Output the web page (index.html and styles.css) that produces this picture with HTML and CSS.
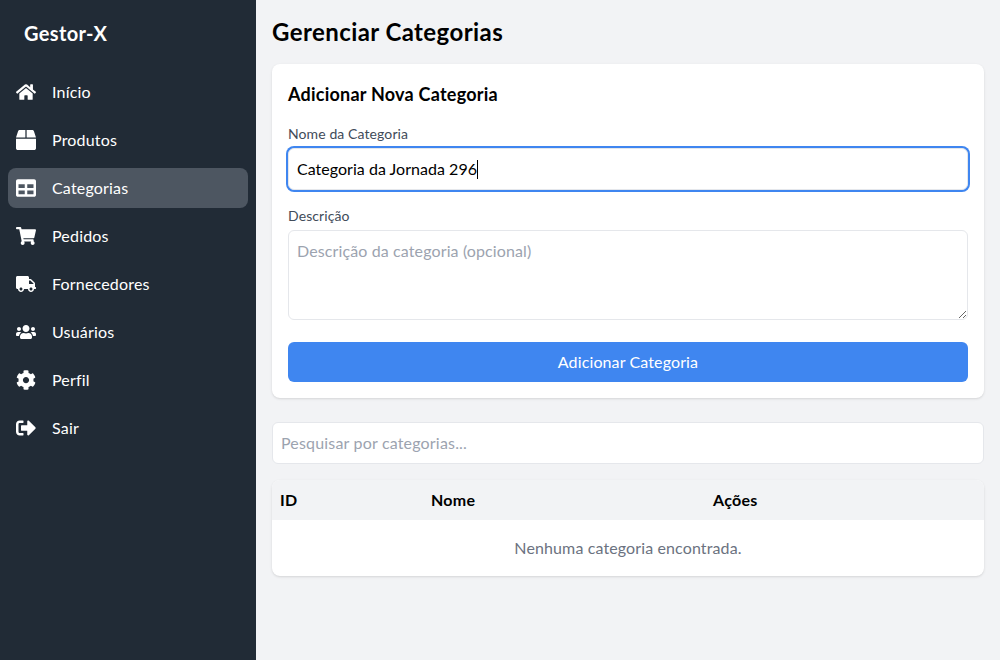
FILE: index.html
```html
<!DOCTYPE html>
<html lang="pt-BR">
<head>
<meta charset="utf-8">
<title>Gestor-X</title>
<link rel="stylesheet" href="styles.css">
</head>
<body>
<div class="app">
  <aside class="sidebar">
    <div class="brand">Gestor-X</div>
    <nav class="nav">
      <a class="nav-item"><svg class="icon" viewBox="0 0 576 512"><path d="M280.37 148.26L96 300.11V464a16 16 0 0 0 16 16l112.06-.29a16 16 0 0 0 15.92-16V368a16 16 0 0 1 16-16h64a16 16 0 0 1 16 16v95.64a16 16 0 0 0 16 16.05L464 480a16 16 0 0 0 16-16V300L295.67 148.26a12.19 12.19 0 0 0-15.3 0zM571.6 251.47L488 182.56V44.05a12 12 0 0 0-12-12h-56a12 12 0 0 0-12 12v72.61L318.47 43a48 48 0 0 0-61 0L4.34 251.47a12 12 0 0 0-1.6 16.9l25.5 31A12 12 0 0 0 45.15 301l235.22-193.74a12.19 12.19 0 0 1 15.3 0L530.9 301a12 12 0 0 0 16.9-1.6l25.5-31a12 12 0 0 0-1.7-16.93z"/></svg><span>Início</span></a>
      <a class="nav-item"><svg class="icon" viewBox="0 0 512 512"><path d="M509.5 184.6L458.9 32.8C452.4 13.2 434.1 0 413.4 0H272v192h238.7c-.4-2.5-.4-5-1.2-7.4zM240 0H98.6c-20.7 0-39 13.2-45.5 32.8L2.5 184.6c-.8 2.4-.8 4.9-1.2 7.4H240V0zM0 224v240c0 26.5 21.5 48 48 48h416c26.5 0 48-21.5 48-48V224H0z"/></svg><span>Produtos</span></a>
      <a class="nav-item active"><svg class="icon" viewBox="0 0 512 512"><path d="M464 32H48C21.49 32 0 53.49 0 80v352c0 26.51 21.49 48 48 48h416c26.51 0 48-21.49 48-48V80c0-26.51-21.49-48-48-48zM224 416H64v-96h160v96zm0-160H64v-96h160v96zm224 160H288v-96h160v96zm0-160H288v-96h160v96z"/></svg><span>Categorias</span></a>
      <a class="nav-item"><svg class="icon" viewBox="0 0 576 512"><path d="M528.12 301.319l47.273-208C578.806 78.301 567.391 64 551.99 64H159.208l-9.166-44.81C147.758 8.021 137.93 0 126.529 0H24C10.745 0 0 10.745 0 24v16c0 13.255 10.745 24 24 24h69.883l70.248 343.435C147.325 417.1 136 435.222 136 456c0 30.928 25.072 56 56 56s56-25.072 56-56c0-15.674-6.447-29.835-16.824-40h209.647C430.447 426.165 424 440.326 424 456c0 30.928 25.072 56 56 56s56-25.072 56-56c0-22.172-12.888-41.332-31.579-50.405l5.517-24.276c3.413-15.018-8.002-29.319-23.403-29.319H218.117l-6.545-32h293.145c11.206 0 20.92-7.754 23.403-18.681z"/></svg><span>Pedidos</span></a>
      <a class="nav-item"><svg class="icon" viewBox="0 0 640 512"><path d="M624 352h-16V243.9c0-12.7-5.1-24.9-14.1-33.9L494 110.1c-9-9-21.2-14.1-33.9-14.1H416V48c0-26.5-21.5-48-48-48H48C21.5 0 0 21.5 0 48v320c0 26.5 21.5 48 48 48h16c0 53 43 96 96 96s96-43 96-96h128c0 53 43 96 96 96s96-43 96-96h48c8.8 0 16-7.2 16-16v-32c0-8.8-7.2-16-16-16zM160 464c-26.5 0-48-21.5-48-48s21.5-48 48-48 48 21.5 48 48-21.5 48-48 48zm320 0c-26.5 0-48-21.5-48-48s21.5-48 48-48 48 21.5 48 48-21.5 48-48 48zm80-208H416V144h44.1l99.9 99.9V256z"/></svg><span>Fornecedores</span></a>
      <a class="nav-item"><svg class="icon" viewBox="0 0 640 512"><path d="M96 224c35.3 0 64-28.7 64-64s-28.7-64-64-64-64 28.7-64 64 28.7 64 64 64zm448 0c35.3 0 64-28.7 64-64s-28.7-64-64-64-64 28.7-64 64 28.7 64 64 64zm32 32h-64c-17.6 0-33.5 7.1-45.1 18.6 40.3 22.1 68.9 62 75.1 109.4h66c17.7 0 32-14.3 32-32v-32c0-35.3-28.7-64-64-64zm-256 0c61.9 0 112-50.1 112-112S381.9 32 320 32 208 82.1 208 144s50.1 112 112 112zm76.8 32h-8.3c-20.8 10-43.9 16-68.5 16s-47.6-6-68.5-16h-8.3C179.6 288 128 339.6 128 403.2V432c0 26.5 21.5 48 48 48h288c26.5 0 48-21.5 48-48v-28.8c0-63.6-51.6-115.2-115.2-115.2zm-223.7-13.4C161.5 263.1 145.6 256 128 256H64c-35.3 0-64 28.7-64 64v32c0 17.7 14.3 32 32 32h65.9c6.3-47.4 34.9-87.3 75.2-109.4z"/></svg><span>Usuários</span></a>
      <a class="nav-item"><svg class="icon" viewBox="0 0 512 512"><path d="M487.4 315.7l-42.6-24.6c4.3-23.2 4.3-47 0-70.2l42.6-24.6c4.9-2.8 7.1-8.6 5.5-14-11.1-35.6-30-67.8-54.7-94.6-3.8-4.1-10-5.1-14.8-2.3L380.8 110c-17.9-15.4-38.5-27.3-60.8-35.1V25.8c0-5.6-3.9-10.5-9.4-11.7-36.7-8.2-74.3-7.8-109.2 0-5.5 1.2-9.4 6.1-9.4 11.7V75c-22.2 7.9-42.8 19.8-60.8 35.1L88.7 85.5c-4.9-2.8-11-1.9-14.8 2.3-24.7 26.7-43.6 58.9-54.7 94.6-1.7 5.4.6 11.2 5.5 14L67.3 221c-4.3 23.2-4.3 47 0 70.2l-42.6 24.6c-4.9 2.8-7.1 8.6-5.5 14 11.1 35.6 30 67.8 54.7 94.6 3.8 4.1 10 5.1 14.8 2.3l42.6-24.6c17.9 15.4 38.5 27.3 60.8 35.1v49.2c0 5.6 3.9 10.5 9.4 11.7 36.7 8.2 74.3 7.8 109.2 0 5.5-1.2 9.4-6.1 9.4-11.7v-49.2c22.2-7.9 42.8-19.8 60.8-35.1l42.6 24.6c4.9 2.8 11 1.9 14.8-2.3 24.7-26.7 43.6-58.9 54.7-94.6 1.5-5.5-.7-11.3-5.6-14.1zM256 336c-44.1 0-80-35.9-80-80s35.9-80 80-80 80 35.9 80 80-35.9 80-80 80z"/></svg><span>Perfil</span></a>
      <a class="nav-item"><svg class="icon" viewBox="0 0 512 512"><path d="M497 273L329 441c-15 15-41 4.5-41-17v-96H152c-13.3 0-24-10.7-24-24v-96c0-13.3 10.7-24 24-24h136V88c0-21.4 25.9-32 41-17l168 168c9.3 9.4 9.3 24.6 0 34zM192 436v-40c0-6.6-5.4-12-12-12H96c-17.7 0-32-14.3-32-32V160c0-17.7 14.3-32 32-32h84c6.6 0 12-5.4 12-12V76c0-6.6-5.4-12-12-12H96c-53 0-96 43-96 96v192c0 53 43 96 96 96h84c6.6 0 12-5.4 12-12z"/></svg><span>Sair</span></a>
    </nav>
  </aside>
  <main class="main">
    <h1 class="page-title">Gerenciar Categorias</h1>
    <form class="card">
      <h2 class="card-title">Adicionar Nova Categoria</h2>
      <div class="field">
        <label class="label">Nome da Categoria</label>
        <div class="input input-focus" role="textbox" contenteditable="true"><span class="value">Categoria da Jornada 296</span><span class="caret"></span></div>
      </div>
      <div class="field field-last">
        <label class="label" for="descricao">Descrição</label>
        <textarea class="input textarea" id="descricao" placeholder="Descrição da categoria (opcional)"></textarea>
      </div>
      <button class="button" type="button">Adicionar Categoria</button>
    </form>
    <input class="input search" type="text" placeholder="Pesquisar por categorias...">
    <table class="table">
      <colgroup><col class="col-id"><col class="col-name"><col></colgroup>
      <thead><tr><th>ID</th><th>Nome</th><th>Ações</th></tr></thead>
      <tbody><tr><td colspan="3">Nenhuma categoria encontrada.</td></tr></tbody>
    </table>
  </main>
</div>
</body>
</html>
```
FILE: styles.css
```css
*, *::before, *::after {
  box-sizing: border-box;
}

body {
  margin: 0;
  font-family: Lato, "Open Sans", sans-serif;
  font-size: 16px;
  line-height: 24px;
  letter-spacing: .12px;
  color: #000;
}

h1, h2 {
  margin: 0;
}

input, textarea, button {
  font: inherit;
  letter-spacing: inherit;
  color: inherit;
}

.app {
  display: flex;
  height: 100vh;
  background: #f2f3f5;
}

.sidebar {
  width: 256px;
  flex: none;
  background: #212b36;
  color: #fff;
}

.brand {
  padding: 19px 24px 17px;
  font-size: 20px;
  line-height: 28px;
  font-weight: 700;
  letter-spacing: .35px;
}

.nav {
  display: flex;
  flex-direction: column;
  gap: 8px;
  padding: 8px;
}

.nav-item {
  display: flex;
  align-items: center;
  gap: 16px;
  height: 40px;
  padding: 8px;
  border-radius: 8px;
  letter-spacing: .18px;
}

.nav-item.active {
  background: #4d5661;
}

.icon {
  width: 20px;
  height: 20px;
  fill: currentColor;
}

.main {
  flex: 1;
  padding: 16px;
}

.page-title {
  margin-bottom: 16px;
  font-size: 24px;
  line-height: 32px;
  font-weight: 700;
  letter-spacing: .42px;
}

.card {
  padding: 16px;
  margin-bottom: 24px;
  border-radius: 8px;
  background: #fff;
  box-shadow: 0 1px 3px rgba(0, 0, 0, .1), 0 1px 2px -1px rgba(0, 0, 0, .1);
}

.card-title {
  margin-bottom: 16px;
  font-size: 18px;
  line-height: 28px;
  font-weight: 700;
  letter-spacing: .23px;
}

.field {
  margin-bottom: 16px;
}

.field-last {
  margin-bottom: 22px;
}

.label {
  display: block;
  margin-bottom: 4px;
  font-size: 14px;
  line-height: 20px;
  letter-spacing: .1px;
  color: #414b59;
}

.input {
  display: block;
  width: 100%;
  height: 42px;
  margin: 0;
  padding: 8px;
  border: 1px solid #e5e7eb;
  border-radius: 6px;
  background: #fff;
  outline: none;
}

.input::placeholder {
  color: #9ca3af;
}

.input-focus {
  display: flex;
  align-items: center;
  letter-spacing: .03px;
  box-shadow: 0 0 0 2px #3f86f0;
}

.caret {
  width: 1px;
  height: 19px;
  background: #000;
}

.textarea {
  height: 90px;
  resize: vertical;
}

.button {
  display: block;
  width: 100%;
  height: 40px;
  padding: 8px;
  border: 0;
  border-radius: 6px;
  background: #3f86f0;
  color: #fff;
}

.search {
  margin-bottom: 16px;
  padding: 7px 8px 9px;
  letter-spacing: .18px;
}

.table {
  width: 100%;
  table-layout: fixed;
  border-collapse: collapse;
  border-radius: 8px;
  overflow: hidden;
  background: #fff;
  box-shadow: 0 1px 3px rgba(0, 0, 0, .1), 0 1px 2px -1px rgba(0, 0, 0, .1);
}

.col-id {
  width: 151px;
}

.col-name {
  width: 282px;
}

.table th {
  padding: 8px;
  background: #f2f3f5;
  font-weight: 700;
  letter-spacing: .25px;
  text-align: left;
}

.table td {
  padding: 16px;
  color: #6b7280;
  text-align: center;
}
```
